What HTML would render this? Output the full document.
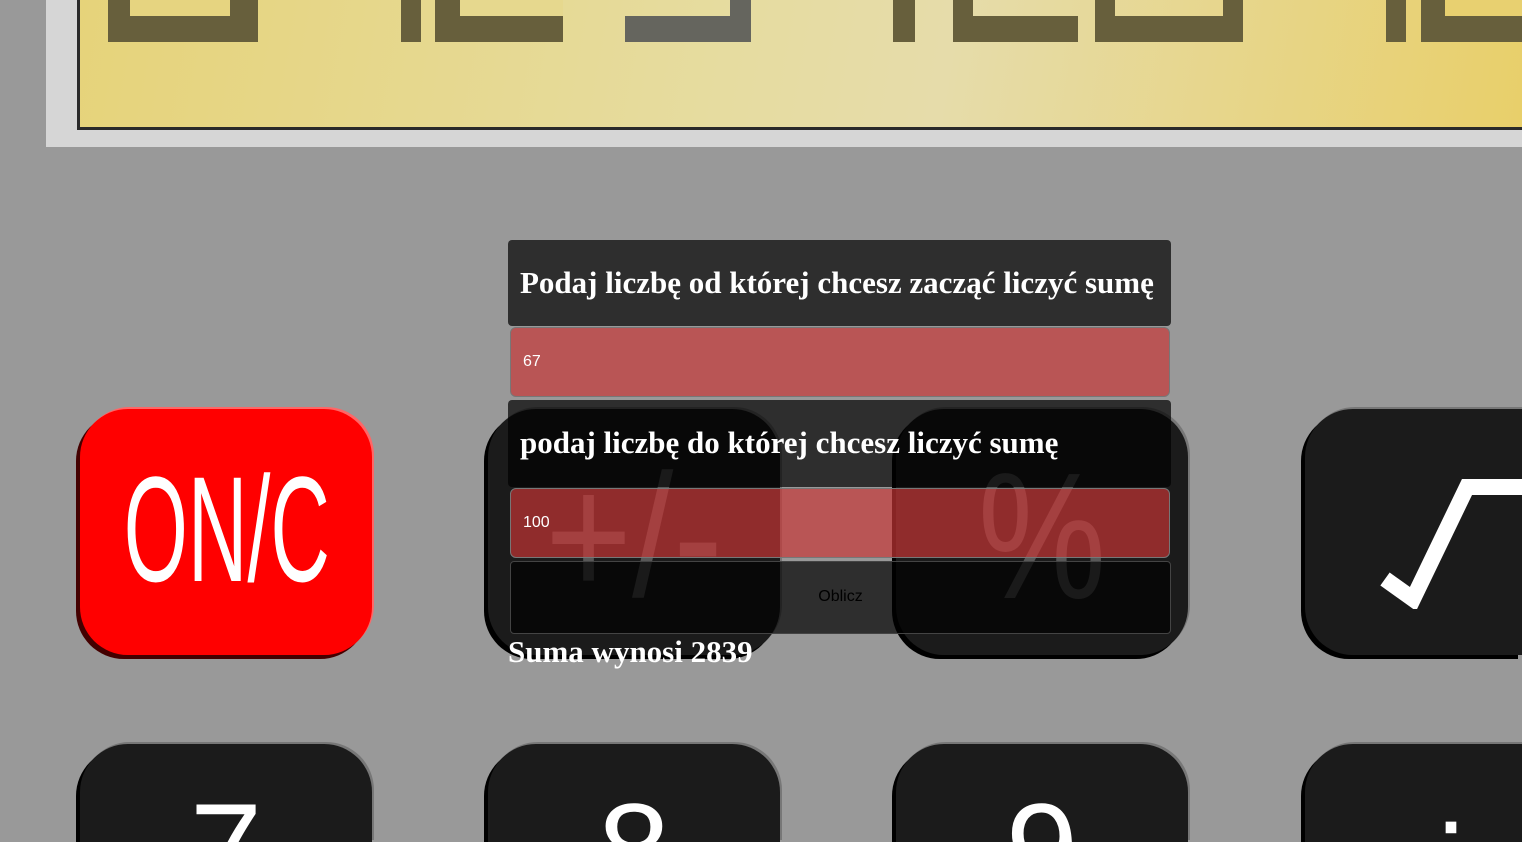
<!DOCTYPE html>
<html style="width:1522px;height:842px;overflow:hidden"><head><meta charset="utf-8"><style>
*{margin:0;padding:0;box-sizing:border-box}
body{width:1522px;height:842px;overflow:hidden;background:#999;position:relative;font-family:"Liberation Sans",sans-serif}
#wrap{position:absolute;left:0;top:0;width:1522px;height:842px;overflow:hidden}
.abs{position:absolute}
.frame{left:46px;top:-10px;width:1476px;height:157px;background:#d6d6d6}
.disp{left:77px;top:-10px;width:1445px;height:140px;border:3px solid #2a2a2a;border-top:none;border-right:none;background:linear-gradient(100deg,#e6d37a 0%,#e6dca0 45%,#e6dcaa 60%,#e8cf6a 100%);overflow:hidden}
.seg{position:absolute;background:#675f3c}
.btn{position:absolute;width:292px;height:246px;border-radius:48px;background:#1b1b1b;box-shadow:-4px 4px 0 #000, 2px -2px 0 #777;overflow:hidden}
.bot{height:98px;border-radius:48px 48px 0 0}
.lbl{position:absolute;left:0;width:100%;text-align:center;color:#fff;font-family:"Liberation Sans",sans-serif}
.box{position:absolute;left:508px;width:663px;background:rgba(0,0,0,0.7);border-radius:4px;color:#fff;font-family:"Liberation Serif",serif;font-weight:bold;font-size:31px;padding-left:12px;white-space:nowrap}
.inp{position:absolute;left:510px;width:660px;height:70px;background:rgba(200,53,53,0.68);border:1px solid #777;border-radius:6px;color:#fff;font-size:16px;padding-left:12px;line-height:68px}
</style></head><body><div id="wrap">
<div class="abs frame"></div>
<div class="abs disp">
 <div class="seg" style="left:28px;top:0;width:150px;height:52px"></div>
 <div class="seg" style="left:50px;top:0;width:100px;height:26px;background:#e6d480"></div>
 <div class="seg" style="left:321px;top:0;width:20px;height:52px"></div>
 <div class="seg" style="left:355px;top:0;width:128px;height:52px"></div>
 <div class="seg" style="left:380px;top:0;width:103px;height:26px;background:#e6d88e"></div>
 <div class="seg" style="left:545px;top:26px;width:126px;height:26px;background:#65655e"></div>
 <div class="seg" style="left:650px;top:0;width:21px;height:30px;background:#65655e"></div>
 <div class="seg" style="left:813px;top:0;width:22px;height:52px"></div>
 <div class="seg" style="left:873px;top:26px;width:125px;height:26px"></div>
 <div class="seg" style="left:873px;top:0;width:20px;height:30px"></div>
 <div class="seg" style="left:1015px;top:26px;width:148px;height:26px"></div>
 <div class="seg" style="left:1015px;top:0;width:20px;height:30px"></div>
 <div class="seg" style="left:1143px;top:0;width:20px;height:30px"></div>
 <div class="seg" style="left:1306px;top:0;width:20px;height:52px"></div>
 <div class="seg" style="left:1341px;top:0;width:104px;height:52px"></div>
 <div class="seg" style="left:1365px;top:0;width:80px;height:26px;background:#e8d070"></div>
</div>

<div class="btn" style="left:80px;top:409px;background:#f00;box-shadow:-4px 4px 0 #400,2px -2px 0 #f66">
 <div class="lbl" style="top:40px;left:-22px;font-size:150px;transform:scaleX(0.55);line-height:160px">ON/C</div>
</div>
<div class="btn" style="left:488px;top:409px"><div class="lbl" style="top:28px;font-size:175px;line-height:200px;color:#585858;transform:scaleX(.85)">+/-</div></div>
<div class="btn" style="left:896px;top:409px"><div class="lbl" style="top:28px;font-size:180px;line-height:200px;color:#585858;transform:scaleX(.8)">%</div></div>
<div class="btn" style="left:1305px;top:409px;width:217px;border-radius:48px 0 0 48px">
 <svg class="abs" style="left:70px;top:60px" width="150" height="140"><path d="M10 110 L38 130 L92 18 L240 18" stroke="#fff" stroke-width="16" fill="none"/></svg>
</div>
<div class="btn bot" style="left:80px;top:744px"><div class="lbl" style="top:40px;font-size:130px;line-height:130px">7</div></div>
<div class="btn bot" style="left:488px;top:744px"><div class="lbl" style="top:40px;font-size:130px;line-height:130px">8</div></div>
<div class="btn bot" style="left:896px;top:744px"><div class="lbl" style="top:40px;font-size:130px;line-height:130px">9</div></div>
<div class="btn bot" style="left:1305px;top:744px;width:217px;border-radius:48px 0 0 0"><div class="lbl" style="top:40px;width:292px;font-size:130px;line-height:130px">÷</div></div>

<div class="box" style="top:240px;height:86px;line-height:86px;background:#2e2e2e">Podaj liczbę od której chcesz zacząć liczyć sumę</div>
<div class="inp" style="top:327px;background:#b95555">67</div>
<div class="box" style="top:400px;height:87px;line-height:86px">podaj liczbę do której chcesz liczyć sumę</div>
<div class="inp" style="top:488px">100</div>
<div class="box" style="top:561px;height:73px;left:510px;width:661px;border:1px solid #444;font-family:'Liberation Sans',sans-serif;font-weight:normal;font-size:16px;color:#000;text-align:center;line-height:70px;padding:0">Oblicz</div>
<div class="abs" style="left:508px;top:634px;color:#fff;font-family:'Liberation Serif',serif;font-weight:bold;font-size:31px;line-height:36px">Suma wynosi 2839</div>
</div></body></html>
